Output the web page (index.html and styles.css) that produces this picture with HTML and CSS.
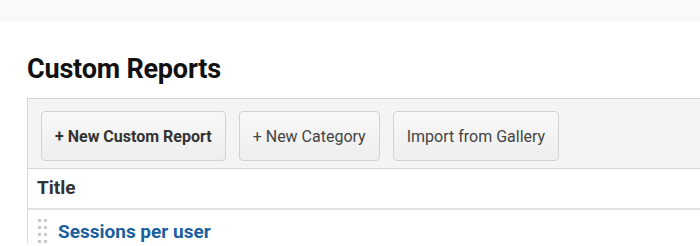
FILE: index.html
```html
<!DOCTYPE html>
<html lang="en">
<head>
    <meta charset="UTF-8">
    <title>Custom Reports</title>
    <link rel="stylesheet" href="styles.css">
</head>
<body>
    <div class="topbar"></div>

    <div class="content">
        <h1>Custom Reports</h1>

        <div class="panel">
            <div class="toolbar">
                <button class="btn btn-primary">+ New Custom Report</button>
                <button class="btn">+ New Category</button>
                <button class="btn">Import from Gallery</button>
            </div>
            <div class="table-head">Title</div>
            <div class="report-row">
                <span class="handle"><i></i><i></i><i></i><i></i><i></i><i></i><i></i><i></i></span>
                <a href="#" class="report-link">Sessions per user</a>
            </div>
        </div>
    </div>
</body>
</html>
```

FILE: styles.css
```css
body { margin: 0; font-family: Roboto, Arial, sans-serif; background-color: #fff; color: #222; overflow: hidden; }
.topbar { height: 21px; background-color: #f8f9fa; }
.content { padding-left: 27px; }
h1 { margin: 0; padding-top: 32px; height: 45px; font-size: 27px; line-height: 32px; font-weight: 700; color: #111; letter-spacing: -0.2px; }
.panel { border-top: 1px solid #d6d6d6; border-left: 1px solid #d6d6d6; }
.toolbar { display: flex; gap: 13px; padding: 12px 13px 7px; background-color: #f4f4f4; border-bottom: 1px solid #d4d4d4; }
.btn { height: 50px; padding: 0 13px; font-family: Roboto, Arial, sans-serif; font-size: 16px; color: #444; background: linear-gradient(#f8f8f8, #eeeeee); border: 1px solid #d2d2d2; border-radius: 4px; }
.btn-primary { font-weight: 700; color: #333; }
.table-head { height: 39px; line-height: 38px; padding-left: 9px; font-size: 19px; font-weight: 700; color: #333; border-bottom: 2px solid #e2e2e2; }
.report-row { display: flex; align-items: center; padding: 9px 0 0 10px; }
.handle { display: grid; grid-template-columns: 3px 3px; column-gap: 3px; row-gap: 4px; margin-right: 11px; }
.handle i { width: 3px; height: 3px; background-color: #c8c8c8; }
.report-link { font-size: 19px; font-weight: 700; color: #1a60a0; text-decoration: none; }
```
